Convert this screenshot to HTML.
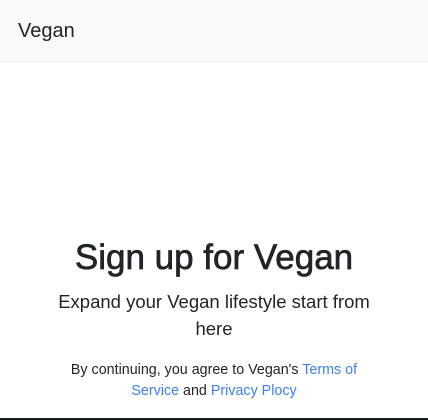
<!DOCTYPE html>
<html><head><style>
body{margin:0;width:428px;height:420px;overflow:hidden;background:#fff;font-family:"Liberation Sans",sans-serif;color:#212529;position:relative}
.hd{height:63px;background:#f8f9fa;font-size:20px;line-height:63px;padding-left:18px}
h1{position:absolute;top:236px;left:0;width:428px;margin:0;text-align:center;font-size:35px;font-weight:normal;-webkit-text-stroke:0.7px #212529;line-height:44px}
.sub{position:absolute;top:288px;left:44px;width:340px;text-align:center;font-size:18.5px;line-height:27px}
.sm{position:absolute;top:360px;left:54px;width:320px;text-align:center;font-size:14.3px;line-height:21px}
a{color:#3d80f0;text-decoration:none}
.bt{position:absolute;bottom:0;left:0;width:428px;height:2px;background:#1a1f1f}
</style></head><body>
<div class="hd">Vegan</div>
<h1>Sign up for Vegan</h1>
<div class="sub">Expand your Vegan lifestyle start from here</div>
<div class="sm">By continuing, you agree to Vegan's <a>Terms of Service</a> and <a>Privacy Plocy</a></div>
<div class="bt"></div>
</body></html>
